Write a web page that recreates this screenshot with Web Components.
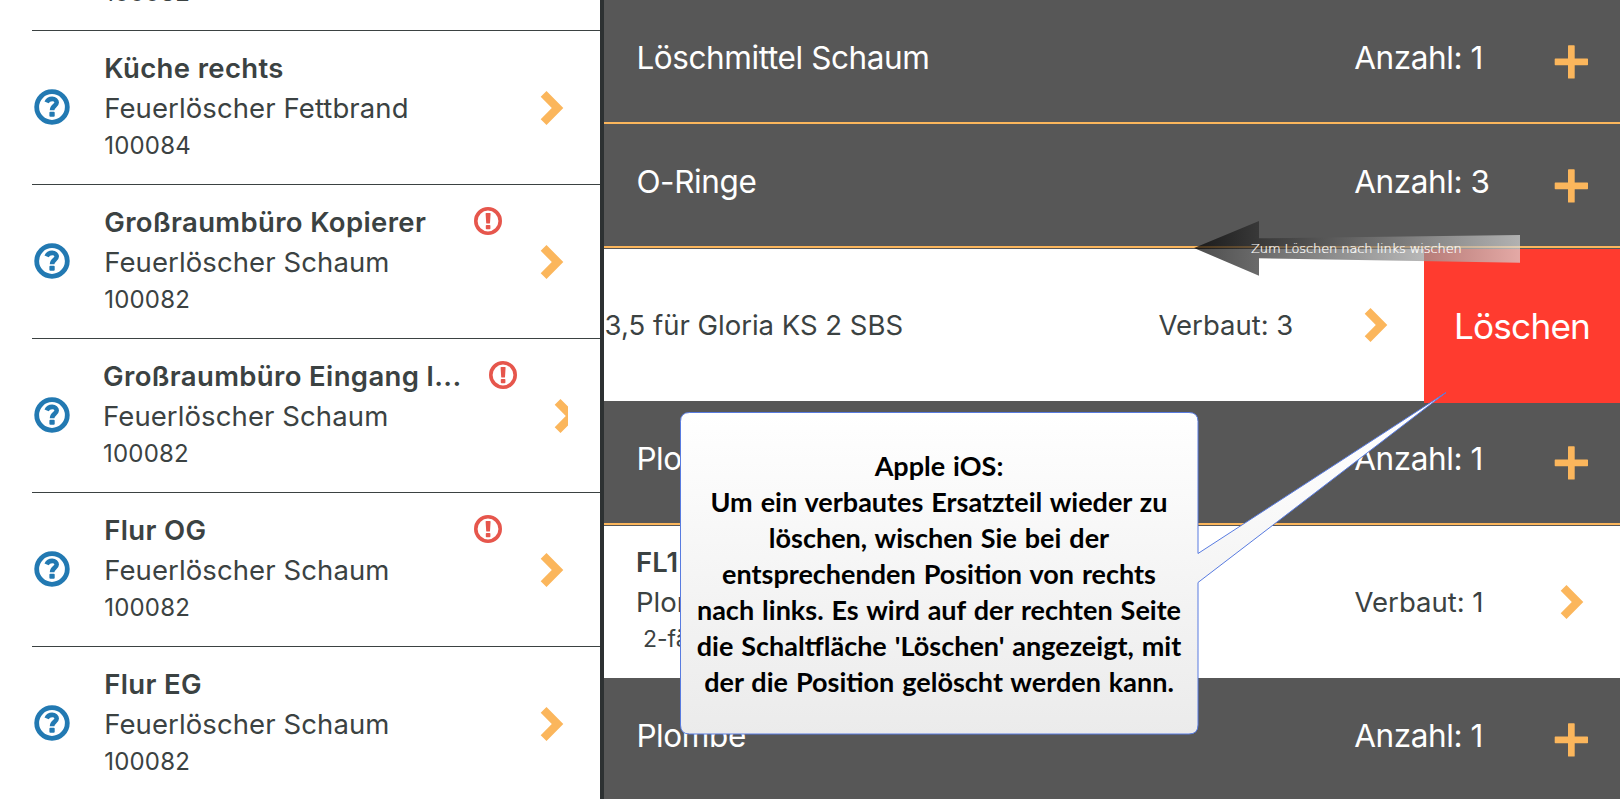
<!DOCTYPE html>
<html lang="de">
<head>
<meta charset="utf-8">
<title>Ersatzteile</title>
<style>
  body {
    margin: 0;
    width: 1620px;
    height: 799px;
    overflow: hidden;
    font-family: Inter, "Liberation Sans", sans-serif;
    color: #3b4242;
    --accent: #fbb65c;
    --grey: #575757;
    --info: #2279b2;
    --warn: #e6564c;
    --delete: #ff3b2f;
  }
</style>
</head>
<body>
<split-view>
  <device-list slot="master">
    <device-row number="100082"></device-row>
    <device-row name="Küche rechts" kind="Feuerlöscher Fettbrand" number="100084"></device-row>
    <device-row name="Großraumbüro Kopierer" kind="Feuerlöscher Schaum" number="100082" warn></device-row>
    <device-row name="Großraumbüro Eingang l..." kind="Feuerlöscher Schaum" number="100082" warn wide></device-row>
    <device-row name="Flur OG" kind="Feuerlöscher Schaum" number="100082" warn></device-row>
    <device-row name="Flur EG" kind="Feuerlöscher Schaum" number="100082"></device-row>
  </device-list>
  <part-list slot="detail">
    <part-group count="1">Löschmittel Schaum</part-group>
    <part-group count="3">O-Ringe</part-group>
    <part-row count="3" swiped><span slot="kind">3,5 für Gloria KS 2 SBS</span></part-row>
    <part-group count="1">Plo</part-group>
    <part-row count="1">
      <span slot="name">FL1</span>
      <span slot="kind">Plom</span>
      <span slot="note">2-fä</span>
    </part-row>
    <part-group count="1">Plombe</part-group>
  </part-list>
</split-view>
<swipe-arrow>Zum Löschen nach links wischen</swipe-arrow>
<call-out>Apple iOS:<br>Um ein verbautes Ersatzteil wieder zu<br>löschen, wischen Sie bei der<br>entsprechenden Position von rechts<br>nach links. Es wird auf der rechten Seite<br>die Schaltfläche 'Löschen' angezeigt, mit<br>der die Position gelöscht werden kann.</call-out>

<script>
const icons = {
  question: `<svg width="36" height="36" viewBox="0 0 36 36" fill="none" stroke="var(--info)">
    <circle cx="18" cy="18" r="15.3" stroke-width="4.8"/>
    <path d="M12.6 13.4C13.7 10.9 15.8 9.9 18.2 9.9C20.9 9.9 22.7 11.4 22.7 13.6C22.7 16.8 18.1 16.6 18.1 21.3" stroke-width="4.6"/>
    <rect x="15.4" y="22.8" width="5.3" height="5" rx="1" fill="var(--info)" stroke="none"/></svg>`,
  warn: `<svg width="28" height="28" viewBox="0 0 28 28" fill="var(--warn)">
    <circle cx="14" cy="14" r="12.2" fill="none" stroke="var(--warn)" stroke-width="3.6"/>
    <path d="M11.6 6.7Q11.6 6 12.3 6H15.9Q16.6 6 16.6 6.7L16 15.9Q15.9 16.6 15.2 16.6H13Q12.3 16.6 12.2 15.9Z"/>
    <rect x="11.8" y="18" width="4.6" height="4.3" rx=".8"/></svg>`,
  chevron: `<svg width="24" height="34" viewBox="0 0 24 34" fill="var(--accent)">
    <path d="M.7 5.8L6.500 0L23.300 17L6.500 34L.7 28.200L11.800 17Z"/></svg>`,
  plus: `<svg width="35" height="34" viewBox="-.7 0 35 34" fill="var(--accent)">
    <path d="M13.3 1Q13.3 .3 14 .3H19.3Q20 .3 20 1V13.6H32.6Q33.3 13.6 33.3 14.3V19.6Q33.3 20.3 32.6 20.3H20V32.9Q20 33.6 19.3 33.6H14Q13.3 33.6 13.3 32.9V20.3H.7Q0 20.3 0 19.6V14.3Q0 13.6 .7 13.6H13.3Z"/></svg>`
}

window.customElements.define('split-view', class extends HTMLElement {
  constructor() {
    super()
    this.attachShadow({ mode: 'open' }).innerHTML = `
      <style>
        :host {
          display: grid;
          grid-template-columns: 600px 1fr;
          width: 1620px;
          height: 799px;
          overflow: hidden;
        }
        .master {
          background: #fff;
          overflow: hidden;
        }
        .detail {
          border-left: 4px solid #2d3132;
          background: var(--grey);
          overflow: hidden;
        }
      </style>
      <div class="master"><slot name="master"></slot></div>
      <div class="detail"><slot name="detail"></slot></div>`
  }
})

window.customElements.define('device-list', class extends HTMLElement {
  constructor() {
    super()
    // scrolled so that only the end of the first row is left
    this.attachShadow({ mode: 'open' }).innerHTML = `
      <style>
        :host {
          display: flex;
          flex-direction: column;
          margin-top: -123px;
          padding-left: 32px;
        }
      </style>
      <slot></slot>`
  }
})

window.customElements.define('device-row', class extends HTMLElement {
  constructor() {
    super()
    this.attachShadow({ mode: 'open' })
  }
  connectedCallback() {
    const get = name => this.getAttribute(name) || ''
    this.shadowRoot.innerHTML = `
      <style>
        :host {
          display: grid;
          grid-template-columns: 70.2px 369.8px 66px 28px;
          box-sizing: border-box;
          height: 154px;
          padding-left: 2px;
          border-bottom: 1px solid #3b4242;
          align-items: center;
          white-space: nowrap;
        }
        :host([wide]) {
          grid-template-columns: 69px 386px 65px 14px;
        }
        svg { display: block; }
        .state { padding-bottom: 1px; }
        .text {
          align-self: start;
          padding-top: 17px;
          font-size: 27.5px;
          line-height: 40px;
        }
        .text div { min-height: 40px; letter-spacing: .1px; }
        .text .name { font-weight: 600; letter-spacing: .36px; }
        .text .number { font-size: 24px; line-height: 35px; min-height: 35px; letter-spacing: .2px; }
        :host(:not([name])) .text { padding-top: 18px; }
        .badge { align-self: start; padding-top: 22px; }
        .more { overflow: hidden; padding-top: 1px; }
      </style>
      <div class="state">${icons.question}</div>
      <div class="text">
        <div class="name">${get('name')}</div>
        <div>${get('kind')}</div>
        <div class="number">${get('number')}</div>
      </div>
      <div class="badge">${this.hasAttribute('warn') ? icons.warn : ''}</div>
      <div class="more">${icons.chevron}</div>`
  }
})

window.customElements.define('part-list', class extends HTMLElement {
  constructor() {
    super()
    this.attachShadow({ mode: 'open' }).innerHTML = `
      <style>
        :host {
          display: flex;
          flex-direction: column;
        }
      </style>
      <slot></slot>`
  }
})

window.customElements.define('part-group', class extends HTMLElement {
  constructor() {
    super()
    this.attachShadow({ mode: 'open' }).innerHTML = `
      <style>
        :host {
          display: grid;
          grid-template-columns: 1fr 199.8px 66px;
          box-sizing: border-box;
          height: 124px;
          padding-left: 32.4px;
          border-bottom: 2px solid var(--accent);
          align-items: center;
          background: var(--grey);
          color: #fff;
          font-size: 31.5px;
          letter-spacing: -.4px;
          line-height: 40px;
          white-space: nowrap;
        }
        .label { padding-bottom: 7px; }
        svg { display: block; margin-top: 2px; }
      </style>
      <div class="label"><slot></slot></div>
      <div class="label">Anzahl: ${this.getAttribute('count')}</div>
      ${icons.plus}`
  }
})

window.customElements.define('part-row', class extends HTMLElement {
  constructor() {
    super()
    this.attachShadow({ mode: 'open' }).innerHTML = `
      <style>
        :host {
          display: flex;
          box-sizing: border-box;
          height: 153px;
          border-top: 1px solid var(--grey);
          white-space: nowrap;
        }
        .content {
          flex: 1;
          display: grid;
          grid-template-columns: 1fr 205.5px 60px;
          align-items: center;
          padding-left: 32px;
          background: #fff;
          font-size: 27.5px;
          line-height: 40px;
        }
        :host([swiped]) .content { padding-left: .6px; }
        .text { align-self: start; padding-top: 16px; }
        .text div { min-height: 40px; }
        .name { font-weight: 600; }
        .text .note { min-height: 33px; padding-left: 7px; font-size: 23px; line-height: 35px; }
        .count { align-self: start; padding-top: 56px; }
        button {
          width: 196px;
          height: 154px;
          padding: 0 0 1px;
          border: 0;
          background: var(--delete);
          color: #fff;
          font: 35.2px Inter, sans-serif;
          letter-spacing: -.8px;
          z-index: 1;
        }
        svg { display: block; }
      </style>
      <div class="content">
        <div class="text">
          <div class="name"><slot name="name"></slot></div>
          <div><slot name="kind"></slot></div>
          <div class="note"><slot name="note"></slot></div>
        </div>
        <div class="count">Verbaut: ${this.getAttribute('count')}</div>
        ${icons.chevron}
      </div>
      ${this.hasAttribute('swiped') ? '<button>Löschen</button>' : ''}`
  }
})

window.customElements.define('swipe-arrow', class extends HTMLElement {
  constructor() {
    super()
    this.attachShadow({ mode: 'open' }).innerHTML = `
      <style>
        :host {
          position: absolute;
          z-index: 2;
          left: 1194px;
          top: 221px;
          width: 326px;
          height: 55px;
          display: flex;
          align-items: center;
          font: 200 13px/16px "DejaVu Sans", sans-serif;
          letter-spacing: -.1px;
          color: #fff;
          -webkit-text-stroke: .2px #fff;
          white-space: nowrap;
        }
        svg { position: absolute; left: 0; top: 0; }
        span { position: relative; padding-left: 57px; }
      </style>
      <svg width="326" height="55" viewBox="0 0 326 55">
        <defs>
          <linearGradient id="fade">
            <stop offset="0" stop-color="#000"/>
            <stop offset="1" stop-color="#d8d8d8"/>
          </linearGradient>
        </defs>
        <path d="M0 27L65 0V17.3L326 14V41.7L65 37.3V54.7Z" fill="url(#fade)" opacity=".7"/>
      </svg>
      <span><slot></slot></span>`
  }
})

window.customElements.define('call-out', class extends HTMLElement {
  constructor() {
    super()
    this.attachShadow({ mode: 'open' }).innerHTML = `
      <style>
        :host {
          position: absolute;
          z-index: 2;
          left: 680px;
          top: 412px;
          width: 518px;
          height: 322px;
          display: flex;
          align-items: center;
          justify-content: center;
          color: #000;
          font: 700 27px/36px Lato, sans-serif;
          word-spacing: 1.4px;
          text-align: center;
          white-space: nowrap;
        }
        svg { position: absolute; left: 0; top: -22px; }
        div { position: relative; padding-top: 2px; }
      </style>
      <svg width="770" height="346" viewBox="0 -22 770 346">
        <defs>
          <linearGradient id="paper" x1="0" y1="0" x2="0" y2="322" gradientUnits="userSpaceOnUse">
            <stop offset="0" stop-color="#fff"/>
            <stop offset="1" stop-color="#ebebeb"/>
          </linearGradient>
        </defs>
        <path d="M9.5 .5H509Q518 .5 518 9.5V141.5L766 -19.5L518 170.5V313Q518 322 509 322H9.5Q.5 322 .5 313V9.5Q.5 .5 9.5 .5Z"
          fill="url(#paper)" stroke="#587be0" stroke-linejoin="bevel"/>
      </svg>
      <div><slot></slot></div>`
  }
})
</script>
</body>
</html>
